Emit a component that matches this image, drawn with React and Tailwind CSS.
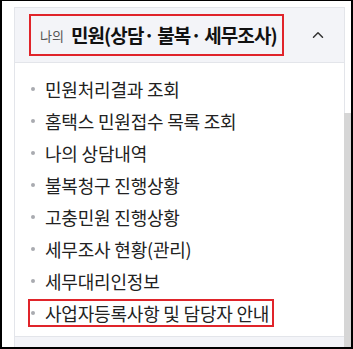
import { ChevronUp } from 'lucide-react';

const items = [
  '민원처리결과 조회',
  '홈택스 민원접수 목록 조회',
  '나의 상담내역',
  '불복청구 진행상황',
  '고충민원 진행상황',
  '세무조사 현황(관리)',
  '세무대리인정보',
  '사업자등록사항 및 담당자 안내',
];

export default function App() {
  return (
    <div
      className="relative w-[353px] h-[349px] overflow-hidden bg-white border-black border-t border-l-2 border-r-2 border-b-2 pl-3 pt-[6px]"
      style={{ fontFamily: '"Noto Sans CJK KR", "Noto Sans", sans-serif' }}
    >
      <div className="w-[331px] border border-[#e3e5ea] border-b-0">
        {/* Header */}
        <div className="h-[55px] bg-[#f3f4f8] flex items-center justify-between pl-[14px] pr-[17px] border-b border-[#e3e5ea]">
          <div className="h-[42px] flex items-center border-2 border-[#e0242a] pl-[9px] pr-[5px]">
            <span className="text-[13px] text-[#555] mr-[7px] mt-[1px]">나의</span>
            <span className="text-[19px] font-bold text-[#111] tracking-[-0.9px]">민원(상담· 불복· 세무조사)</span>
          </div>
          <ChevronUp className="w-[18px] h-[18px] text-[#333]" strokeWidth={2} />
        </div>

        {/* List */}
        <ul className="pt-[10px] pb-[7px] pl-[13px]">
          {items.map((item, i) => (
            <li key={item} className="h-[32px] flex items-center">
              <span
                className={`inline-flex items-center h-[28px] border-2 px-[1px] pr-[3px] ${
                  i === items.length - 1 ? 'border-[#e0242a]' : 'border-transparent'
                }`}
              >
                <span className="w-[4px] h-[4px] rounded-full bg-[#a9abb0] mr-[10px]" />
                <span className="text-[18px] text-[#222] tracking-[-0.2px]">{item}</span>
              </span>
            </li>
          ))}
        </ul>

        <div className="h-[12px] bg-[#f3f4f8] border-t border-[#e3e5ea]" />
      </div>

      {/* Scrollbar thumb */}
      <div className="absolute right-0 top-[112px] bottom-0 w-[7px] bg-[#d6d6d6]" />
    </div>
  );
}
